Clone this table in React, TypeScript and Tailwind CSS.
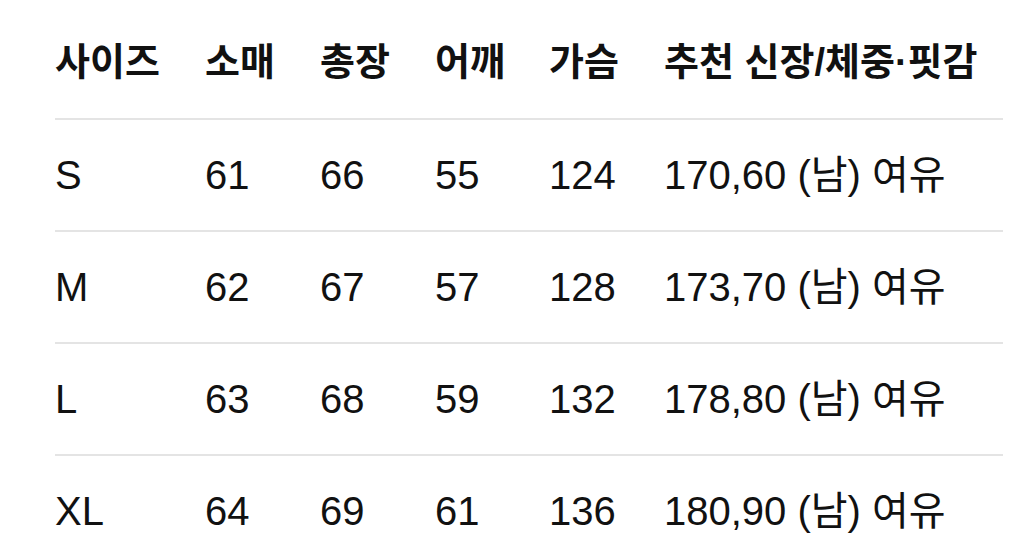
import React from 'react';

const headers = ['사이즈', '소매', '총장', '어깨', '가슴', '추천 신장/체중·핏감'];

const rows = [
  ['S', '61', '66', '55', '124', '170,60 (남) 여유'],
  ['M', '62', '67', '57', '128', '173,70 (남) 여유'],
  ['L', '63', '68', '59', '132', '178,80 (남) 여유'],
  ['XL', '64', '69', '61', '136', '180,90 (남) 여유'],
];

const cols = 'grid grid-cols-[150px_115px_115px_114px_115px_1fr]';

export default function App() {
  return (
    <div
      className="w-[1024px] h-[560px] overflow-hidden bg-white pt-[6px] text-[#111111]"
      style={{ fontFamily: '"Liberation Sans", "Noto Sans CJK KR", sans-serif' }}
    >
      <div className="ml-[55px] w-[948px]">
        <div className={`${cols} h-[112px] items-center text-[38px] font-bold`}>
          {headers.map((h) => (
            <div key={h} className="whitespace-nowrap">{h}</div>
          ))}
        </div>
        {rows.map((r) => (
          <div key={r[0]} className={`${cols} h-[112px] items-center border-t-2 border-[#e4e4e4] text-[40px]`}>
            {r.map((c, i) => (
              <div key={i} className="whitespace-nowrap">{c}</div>
            ))}
          </div>
        ))}
      </div>
    </div>
  );
}
